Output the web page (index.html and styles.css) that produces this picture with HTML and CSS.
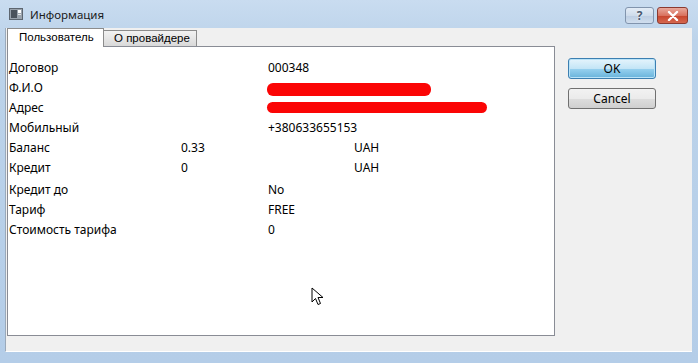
FILE: index.html
```html
<!DOCTYPE html>
<html lang="ru">
<head>
    <meta charset="UTF-8">
    <title>Информация</title>
    <link rel="stylesheet" href="styles.css">
</head>
<body>
    <div class="window">
        <div class="titlebar">
            <svg class="app-icon" width="14" height="12" viewBox="0 0 14 12">
                <rect x="0.5" y="0.5" width="13" height="11" fill="#9aa3ad" stroke="#5d6670"/>
                <rect x="2" y="2" width="6" height="8" fill="#4b535c"/>
                <rect x="9" y="2" width="3" height="3" fill="#ffffff"/>
                <rect x="9" y="6" width="3" height="1" fill="#e6e6e6"/>
            </svg>
            <div class="title">Информация</div>
            <div class="caption-buttons">
                <div class="cap-btn help">?</div>
                <div class="cap-btn close">
                    <svg width="12" height="10" viewBox="0 0 12 10">
                        <path d="M2 1 L10 9 M10 1 L2 9" stroke="#ffffff" stroke-width="2.4" stroke-linecap="round"/>
                    </svg>
                </div>
            </div>
        </div>

        <div class="client">
            <div class="tabs">
                <div class="tab-bar">
                    <div class="tab active">Пользователь</div>
                    <div class="tab">О провайдере</div>
                </div>
                <div class="panel">
                    <div class="row">
                        <span class="label">Договор</span>
                        <span class="c3">000348</span>
                    </div>
                    <div class="row">
                        <span class="label">Ф.И.О</span>
                        <span class="c3"><span class="mark name"></span></span>
                    </div>
                    <div class="row">
                        <span class="label">Адрес</span>
                        <span class="c3"><span class="mark addr"></span></span>
                    </div>
                    <div class="row">
                        <span class="label">Мобильный</span>
                        <span class="c3">+380633655153</span>
                    </div>
                    <div class="row">
                        <span class="label">Баланс</span>
                        <span class="c2">0.33</span>
                        <span class="c4">UAH</span>
                    </div>
                    <div class="row">
                        <span class="label">Кредит</span>
                        <span class="c2">0</span>
                        <span class="c4">UAH</span>
                    </div>
                    <div class="row spaced">
                        <span class="label">Кредит до</span>
                        <span class="c3">No</span>
                    </div>
                    <div class="row">
                        <span class="label">Тариф</span>
                        <span class="c3">FREE</span>
                    </div>
                    <div class="row">
                        <span class="label">Стоимость тарифа</span>
                        <span class="c3">0</span>
                    </div>
                </div>
            </div>

            <div class="actions">
                <button class="btn default">OK</button>
                <button class="btn">Cancel</button>
            </div>
        </div>

        <svg class="cursor" width="16" height="20" viewBox="0 0 16 20">
            <path d="M1 1 L1 15 L4.5 11.5 L7 17.5 L9.5 16.5 L7 10.5 L12 10.5 Z" fill="#ffffff" stroke="#000000" stroke-width="1" stroke-linejoin="round"/>
        </svg>
    </div>
</body>
</html>
```

FILE: styles.css
```css
body {
    margin: 0;
    font-family: "Noto Sans", "Open Sans", sans-serif;
    font-size: 12px;
    color: #000;
    background-color: #b9d1ea;
}

.window {
    position: relative;
    width: 698px;
    height: 363px;
    box-sizing: border-box;
    padding: 0 6px 11px 5px;
    background: linear-gradient(to bottom, #c9dcf0 0px, #bcd3ea 40px, #b4cde8 100%);
    display: flex;
    flex-direction: column;
}

.titlebar {
    height: 28px;
    display: flex;
    align-items: center;
    padding-left: 4px;
}

.app-icon {
    margin-right: 7px;
}

.title {
    color: #1b1b1b;
    font-size: 11.5px;
}

.caption-buttons {
    margin-left: auto;
    display: flex;
    gap: 3px;
    align-self: flex-start;
    margin-top: 7px;
    margin-right: 4px;
}

.cap-btn {
    height: 17px;
    box-sizing: border-box;
    border-radius: 3px;
    display: flex;
    align-items: center;
    justify-content: center;
}

.cap-btn.help {
    width: 29px;
    border: 1px solid #8194ad;
    background: linear-gradient(to bottom, #e3ecf6 0%, #cfdceb 50%, #bccde2 51%, #d0deee 100%);
    color: #4a5a70;
    font-weight: bold;
    font-size: 12px;
    line-height: 1;
    text-shadow: 0 0 2px #ffffff;
}

.cap-btn.close {
    width: 31px;
    border: 1px solid #8b3a30;
    background: linear-gradient(to bottom, #e9a99c 0%, #d9725f 50%, #c7432c 51%, #d5684f 100%);
}

.client {
    flex: 1;
    background-color: #f0f0f0;
    display: flex;
    border-left: 1px solid #9aa9ba;
    border-bottom: 1px solid #ffffff;
}

.tabs {
    margin-left: 1px;
    width: 548px;
    display: flex;
    flex-direction: column;
}

.tab-bar {
    height: 18px;
    display: flex;
    align-items: flex-end;
}

.tab {
    height: 16px;
    box-sizing: border-box;
    width: 93px;
    padding: 0 0 0 10px;
    border: 1px solid #8c8c8c;
    border-bottom: none;
    border-left: none;
    background: linear-gradient(to bottom, #f2f2f2 0%, #e6e6e6 50%, #d9d9d9 100%);
    display: flex;
    align-items: center;
    line-height: 1;
    font-family: "Liberation Sans", Arial, sans-serif;
    font-size: 11.5px;
}

.tab.active {
    height: 19px;
    width: 97px;
    margin-bottom: -1px;
    padding: 0 0 0 11px;
    border-left: 1px solid #8c8c8c;
    background-color: #ffffff;
    background-image: none;
    position: relative;
    z-index: 1;
}

.panel {
    height: 290px;
    box-sizing: border-box;
    background-color: #ffffff;
    border: 1px solid #898c95;
    padding: 11px 0 0 1px;
}

.row {
    display: grid;
    grid-template-columns: 172px 87px 86px 1fr;
    height: 20px;
    align-items: center;
    line-height: 20px;
}

.row.spaced {
    margin-top: 2px;
}

.label {
    grid-column: 1;
}

.c2 {
    grid-column: 2;
}

.c3 {
    grid-column: 3 / span 2;
    display: flex;
    align-items: center;
}

.c4 {
    grid-column: 4;
}

.mark {
    display: block;
    background-color: #fb0505;
    border-radius: 6px;
    margin-left: -1px;
}

.mark.name {
    width: 164px;
    height: 13px;
    margin-top: 3px;
}

.mark.addr {
    width: 220px;
    height: 11px;
    margin-top: -1px;
}

.actions {
    margin-left: 13px;
    padding-top: 30px;
    display: flex;
    flex-direction: column;
    gap: 9px;
}

.btn {
    width: 88px;
    height: 21px;
    font-family: "Noto Sans", "Open Sans", sans-serif;
    font-size: 12px;
    color: #000;
    border: 1px solid #707070;
    border-radius: 3px;
    background: linear-gradient(to bottom, #f2f2f2 0%, #ebebeb 50%, #dddddd 51%, #cfcfcf 100%);
    padding: 0;
    line-height: 1;
}

.btn.default {
    border-color: #3c7fb1;
    background: linear-gradient(to bottom, #e5f4fc 0%, #c4e5f6 50%, #98d1ef 51%, #68b3db 100%);
    box-shadow: inset 0 0 0 1px #b9e3f8;
}

.cursor {
    position: absolute;
    left: 311px;
    top: 287px;
}
```
